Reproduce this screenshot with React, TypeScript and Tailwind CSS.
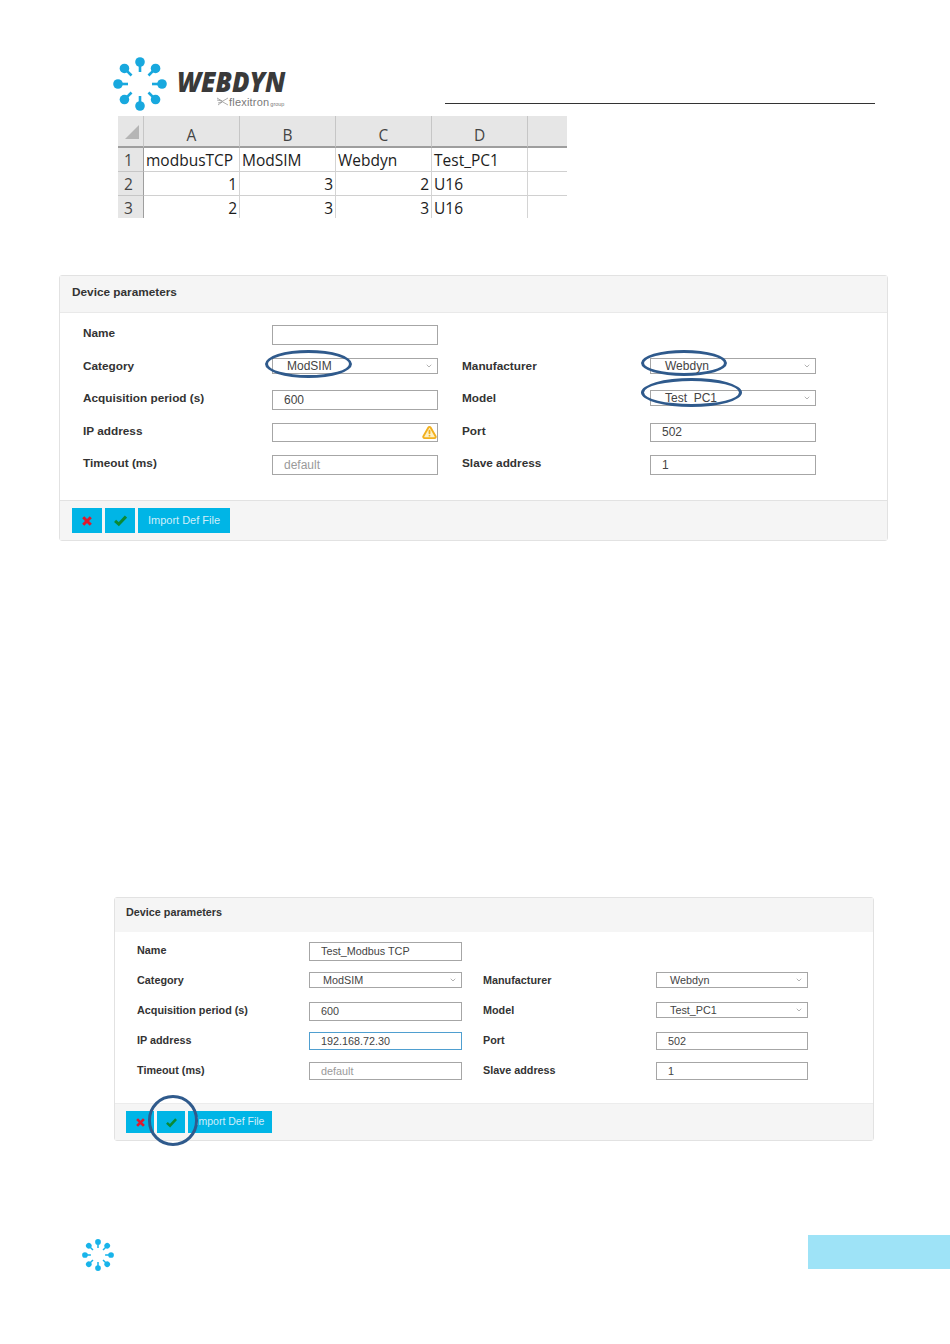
import React from "react";
import { ChevronDown, TriangleAlert } from "lucide-react";

const SANS = "font-['Liberation_Sans',Arial,sans-serif]";

function Logo({ size, color }: { size: number; color: string }) {
  const angles = [0, 45, 90, 135, 180, 225, 270, 315];
  return (
    <svg width={size} height={size} viewBox="0 0 54 54" className="block shrink-0">
      {angles.map((a) => (
        <g key={a} transform={`rotate(${a} 27 27)`}>
          <line x1="27" y1="6" x2="27" y2="15" stroke={color} strokeWidth="2.6" />
          <circle cx="27" cy="5" r="4.8" fill={color} />
        </g>
      ))}
    </svg>
  );
}

function CrossIcon({ size }: { size: number }) {
  return (
    <svg width={size} height={size} viewBox="0 0 10 10" className="block">
      <path d="M1.2 1.2 L8.8 8.8 M8.8 1.2 L1.2 8.8" stroke="#e0182d" strokeWidth="3" fill="none" />
    </svg>
  );
}

function CheckIcon({ size }: { size: number }) {
  return (
    <svg width={size} height={size} viewBox="0 0 12 10" className="block">
      <path d="M1 5.4 L4.4 8.4 L11 1.4" stroke="#0b8a35" strokeWidth="2.8" fill="none" />
    </svg>
  );
}

function Flexitron() {
  return (
    <div className="flex items-end ml-[40px] -mt-[2px] h-[12px] text-[#7a7a7a] leading-none">
      <svg width="12" height="10" viewBox="0 0 12 10" className="mb-[1px]">
        <path d="M0 1 L5 4 L0 3 M1 8 L5 5 L1 6 M5 4.5 L11 1 M5 4.5 L11 8" stroke="#8a8a8a" strokeWidth="0.7" fill="none" />
      </svg>
      <span className={`${SANS} text-[11px] tracking-[0.2px]`}>flexitron</span>
      <span className={`${SANS} text-[5.5px] ml-[1px] mb-[1px]`}>group</span>
    </div>
  );
}

function HeaderCell({ children, last }: { children?: React.ReactNode; last?: boolean }) {
  return (
    <div className={`h-[32px] bg-[#e6e6e6] border-b-[2px] border-[#9e9e9e] flex items-center justify-center pt-[9px] text-[#444] ${last ? "" : "border-r border-r-[#c6c6c6]"}`}>
      {children}
    </div>
  );
}

function RowHead({ n, h }: { n: string; h: string }) {
  return (
    <div className={`${h} bg-[#e6e6e6] border-r border-[#9e9e9e] border-b border-b-[#c6c6c6] flex items-center pl-[6px] pt-[2px] text-[#444]`}>{n}</div>
  );
}

function Cell({ children, right, h, noBorder }: { children?: React.ReactNode; right?: boolean; h: string; noBorder?: boolean }) {
  return (
    <div className={`${h} border-b border-b-[#d0d0d0] flex items-center px-[2px] pt-[2px] text-[#1c1c1c] whitespace-nowrap ${noBorder ? "" : "border-r border-r-[#d4d4d4]"} ${right ? "justify-end" : ""}`}>
      {children}
    </div>
  );
}

function Sheet() {
  const rows = [
    { n: "2", v: ["1", "3", "2", "U16"] },
    { n: "3", v: ["2", "3", "3", "U16"] },
  ];
  return (
    <div className="ml-[118px] mt-[6px] w-[449px] h-[102px] overflow-hidden grid grid-cols-[26px_96px_96px_96px_96px_39px] font-['Open_Sans',sans-serif] text-[15.5px] leading-none">
      <HeaderCell>
        <svg width="16" height="16" viewBox="0 0 16 16" className="-mt-[7px] ml-[2px]"><path d="M15 1 V15 H1 Z" fill="#b5b5b5" /></svg>
      </HeaderCell>
      <HeaderCell>A</HeaderCell>
      <HeaderCell>B</HeaderCell>
      <HeaderCell>C</HeaderCell>
      <HeaderCell>D</HeaderCell>
      <HeaderCell last />
      <RowHead n="1" h="h-[24px]" />
      <Cell h="h-[24px]">modbusTCP</Cell>
      <Cell h="h-[24px]">ModSIM</Cell>
      <Cell h="h-[24px]">Webdyn</Cell>
      <Cell h="h-[24px]">Test_PC1</Cell>
      <Cell h="h-[24px]" noBorder />
      {rows.map((r) => (
        <React.Fragment key={r.n}>
          <RowHead n={r.n} h="h-[24px]" />
          <Cell h="h-[24px]" right>{r.v[0]}</Cell>
          <Cell h="h-[24px]" right>{r.v[1]}</Cell>
          <Cell h="h-[24px]" right>{r.v[2]}</Cell>
          <Cell h="h-[24px]">{r.v[3]}</Cell>
          <Cell h="h-[24px]" noBorder />
        </React.Fragment>
      ))}
    </div>
  );
}

function Ellipse({ className }: { className: string }) {
  return <div className={`absolute rounded-[50%] border-[3px] border-[#2f5a8c] pointer-events-none ${className}`} />;
}

type FieldProps = {
  small?: boolean;
  value?: string;
  muted?: boolean;
  focus?: boolean;
  warn?: boolean;
  h?: string;
};

function Field({ small, value, muted, focus, warn, h }: FieldProps) {
  return (
    <div
      className={`relative bg-white border flex items-center ${h ?? (small ? "h-[19px]" : "h-[20px]")} ${focus ? "border-[#4f9fd0]" : "border-[#a6a6a6]"} ${small ? "pl-[11px] text-[10.8px]" : "pl-[11px] text-[12px]"} ${muted ? "text-[#9a9a9a]" : "text-[#444]"}`}
    >
      {value}
      {warn && (
        <TriangleAlert size={15} strokeWidth={3} className="absolute right-0 top-[1px] text-[#f2b01e] fill-[#fdf0c4]" />
      )}
    </div>
  );
}

function Select({ small, value, children }: { small?: boolean; value: string; children?: React.ReactNode }) {
  return (
    <div className="relative">
      <div className={`bg-white border border-[#a6a6a6] flex items-center justify-between h-[16px] pr-[4px] text-[#444] ${small ? "text-[10.8px] pl-[13px]" : "text-[12px] pl-[14px]"}`}>
        <span>{value}</span>
        <ChevronDown size={8} strokeWidth={1.5} className="text-[#666]" />
      </div>
      {children}
    </div>
  );
}

function Label({ small, children }: { small?: boolean; children: React.ReactNode }) {
  return <div className={`font-bold text-[#333] h-[16px] leading-[16px] ${small ? "text-[10.8px]" : "text-[11.8px]"}`}>{children}</div>;
}

function Buttons({ small }: { small?: boolean }) {
  const base = "bg-[#00b5e6] flex items-center justify-center";
  return (
    <div className={`flex ${small ? "gap-[3px] h-[22px]" : "gap-[3px] h-[25px]"}`}>
      <div className={`${base} ${small ? "w-[28px]" : "w-[30px]"}`}><CrossIcon size={small ? 9 : 10} /></div>
      <div className={`${base} ${small ? "w-[28px]" : "w-[30px]"}`}><CheckIcon size={small ? 11 : 13} /></div>
      <div className={`${base} text-[#cfeefa] ${small ? "w-[84px] text-[10.5px]" : "w-[92px] text-[11px]"}`}>Import Def File</div>
    </div>
  );
}

function CardOne() {
  return (
    <section className={`relative ml-[59px] mt-[57px] w-[829px] h-[266px] border border-[#e2e2e2] rounded-[3px] flex flex-col ${SANS}`}>
      <header className="h-[37px] bg-[#f5f5f5] border-b border-[#e9e9e9] pl-[12px] pt-[9px] text-[11.8px] font-bold text-[#333] leading-[14px]">Device parameters</header>
      <div className="flex-1 pl-[23px] pt-[12px] grid grid-cols-[189px_166px_212px_166px] auto-rows-[32.5px] [&>*:nth-child(4n+3)]:ml-[24px]">
        <Label>Name</Label><Field />
        <div /><div />
        <Label>Category</Label>
        <Select value="ModSIM"><Ellipse className="-left-[7px] -top-[8px] w-[87px] h-[28px]" /></Select>
        <Label>Manufacturer</Label>
        <Select value="Webdyn"><Ellipse className="-left-[9px] -top-[8px] w-[86px] h-[26px]" /></Select>
        <Label>Acquisition period (s)</Label><Field value="600" />
        <Label>Model</Label>
        <Select value="Test_PC1"><Ellipse className="-left-[9px] -top-[12px] w-[101px] h-[29px]" /></Select>
        <Label>IP address</Label><Field warn h="h-[19px]" />
        <Label>Port</Label><Field value="502" h="h-[19px]" />
        <Label>Timeout (ms)</Label><Field value="default" muted />
        <Label>Slave address</Label><Field value="1" />
      </div>
      <footer className="h-[40px] bg-[#f5f5f5] border-t border-[#e2e2e2] pl-[12px] pt-[7px]"><Buttons /></footer>
    </section>
  );
}

function CardTwo() {
  return (
    <section className={`relative ml-[114px] mt-[356px] w-[760px] h-[244px] border border-[#e2e2e2] rounded-[3px] flex flex-col ${SANS}`}>
      <header className="h-[34px] bg-[#f5f5f5] pl-[11px] pt-[7px] text-[10.8px] font-bold text-[#333] leading-[14px]">Device parameters</header>
      <div className="flex-1 pl-[22px] pt-[10px] grid grid-cols-[172px_153px_194px_152px] auto-rows-[30px] [&>*:nth-child(4n+3)]:ml-[21px]">
        <Label small>Name</Label><Field small value="Test_Modbus TCP" />
        <div /><div />
        <Label small>Category</Label><Select small value="ModSIM" />
        <Label small>Manufacturer</Label><Select small value="Webdyn" />
        <Label small>Acquisition period (s)</Label><Field small value="600" />
        <Label small>Model</Label><Select small value="Test_PC1" />
        <Label small>IP address</Label><Field small focus value="192.168.72.30" h="h-[18px]" />
        <Label small>Port</Label><Field small value="502" h="h-[18px]" />
        <Label small>Timeout (ms)</Label><Field small muted value="default" h="h-[18px]" />
        <Label small>Slave address</Label><Field small value="1" h="h-[18px]" />
      </div>
      <footer className="relative h-[37px] bg-[#f5f5f5] border-t border-[#ececec] pl-[11px] pt-[7px]">
        <Buttons small />
        <div className="absolute left-[33px] -top-[9px] w-[50px] h-[51px] rounded-full border-[3px] border-[#2f5a8c]" />
      </footer>
    </section>
  );
}

export default function App() {
  return (
    <div className="w-[950px] h-[1344px] bg-white overflow-hidden flex flex-col">
      <div className="h-[110px] pt-[57px] pl-[113px] flex">
        <Logo size={54} color="#18a8de" />
        <div className="ml-[10px] w-[110px] h-[53px] flex flex-col">
          <div className="h-[41px] pt-[9px] font-['Open_Sans',sans-serif] font-extrabold italic text-[28px] leading-[30px] text-[#3a3a3a] origin-left scale-x-[0.92] whitespace-nowrap">WEBDYN</div>
          <Flexitron />
        </div>
        <div className="ml-[158px] mt-[46px] w-[430px] h-px bg-[#333]" />
      </div>
      <Sheet />
      <CardOne />
      <CardTwo />
      <div className="mt-[94px] pl-[82px] flex justify-between items-start">
        <div className="mt-[4px]"><Logo size={32} color="#18b4ea" /></div>
        <div className="w-[142px] h-[34px] bg-[#9ee3f7]" />
      </div>
    </div>
  );
}
